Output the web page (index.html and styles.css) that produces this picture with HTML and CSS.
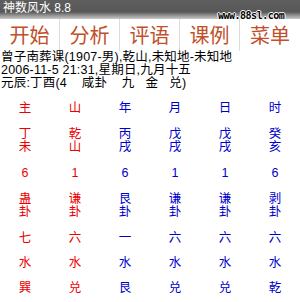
FILE: index.html
```html
<!DOCTYPE html>
<html>
<head>
<meta charset="utf-8">
<link rel="stylesheet" href="styles.css">
</head>
<body>
<div class="titlebar"><span class="title">神数风水 8.8</span></div>
<div class="watermark">www.88sl.com</div>
<div class="menu">
  <div class="btn">开始</div>
  <div class="btn">分析</div>
  <div class="btn">评语</div>
  <div class="btn">课例</div>
  <div class="btn">菜单</div>
</div>
<div class="info">
  <div>曾子南葬课(1907-男),乾山,未知地-未知地</div>
  <div>2006-11-5 21:31,星期日,九月十五</div>
  <div>元辰:丁酉(4&nbsp;&nbsp;&nbsp;&nbsp;咸卦&nbsp;&nbsp;&nbsp;&nbsp;九&nbsp;&nbsp;&nbsp;金&nbsp;&nbsp;&nbsp;兑)</div>
</div>
<div class="grid">
  <div class="row"><div class="cell red"><div>主</div></div><div class="cell red"><div>山</div></div><div class="cell blue"><div>年</div></div><div class="cell blue"><div>月</div></div><div class="cell blue"><div>日</div></div><div class="cell blue"><div>时</div></div></div>
  <div class="row dbl"><div class="cell red"><div>丁</div><div>未</div></div><div class="cell red"><div>乾</div><div>山</div></div><div class="cell blue"><div>丙</div><div>戌</div></div><div class="cell blue"><div>戊</div><div>戌</div></div><div class="cell blue"><div>戊</div><div>戌</div></div><div class="cell blue"><div>癸</div><div>亥</div></div></div>
  <div class="row"><div class="cell red"><div>6</div></div><div class="cell red"><div>1</div></div><div class="cell blue"><div>6</div></div><div class="cell blue"><div>1</div></div><div class="cell blue"><div>1</div></div><div class="cell blue"><div>6</div></div></div>
  <div class="row dbl"><div class="cell red"><div>蛊</div><div>卦</div></div><div class="cell red"><div>谦</div><div>卦</div></div><div class="cell blue"><div>艮</div><div>卦</div></div><div class="cell blue"><div>谦</div><div>卦</div></div><div class="cell blue"><div>谦</div><div>卦</div></div><div class="cell blue"><div>剥</div><div>卦</div></div></div>
  <div class="row"><div class="cell red"><div>七</div></div><div class="cell red"><div>六</div></div><div class="cell blue"><div>一</div></div><div class="cell blue"><div>六</div></div><div class="cell blue"><div>六</div></div><div class="cell blue"><div>六</div></div></div>
  <div class="row"><div class="cell red"><div>水</div></div><div class="cell red"><div>水</div></div><div class="cell blue"><div>水</div></div><div class="cell blue"><div>水</div></div><div class="cell blue"><div>水</div></div><div class="cell blue"><div>水</div></div></div>
  <div class="row"><div class="cell red"><div>巽</div></div><div class="cell red"><div>兑</div></div><div class="cell blue"><div>艮</div></div><div class="cell blue"><div>兑</div></div><div class="cell blue"><div>兑</div></div><div class="cell blue"><div>乾</div></div></div>
</div>
</body>
</html>
```
FILE: styles.css
```css
html, body {
  margin: 0;
  padding: 0;
  background: #ffffff;
  width: 300px;
  height: 302px;
  overflow: hidden;
  font-family: "Liberation Sans", "Noto Sans CJK SC", sans-serif;
}
body { position: relative; }
.titlebar {
  height: 19px;
  background: linear-gradient(#5e5e5e 0px, #585858 12px, #8c8c8c 15px, #c8c8c8 19px);
}
.title {
  display: block;
  color: #ffffff;
  font-size: 12px;
  line-height: 17px;
  padding-left: 3px;
}
.watermark {
  position: absolute;
  left: 218px;
  top: 11px;
  font-family: "DejaVu Sans Mono", monospace;
  font-size: 10px;
  font-weight: bold;
  line-height: 10px;
  color: #000;
  text-shadow: 1px 0 0 #fff, -1px 0 0 #fff, 0 1px 0 #fff, 0 -1px 0 #fff;
  letter-spacing: -0.5px;
}
.menu {
  display: flex;
  height: 32px;
}
.btn {
  flex: 0 0 60px;
  box-sizing: border-box;
  border-right: 1px solid #dcdcdc;
  text-align: center;
  color: #c0502a;
  font-size: 20px;
  line-height: 20px;
  padding-top: 7px;
}
.btn:last-child { border-right: none; }
.info {
  font-size: 12.5px;
  line-height: 13px;
  color: #000;
  padding-left: 1px;
  letter-spacing: 0.2px;
}
.grid {
  padding-top: 6px;
}
.row {
  display: flex;
  padding: 6px 0;
}
.row.dbl {
  padding: 7px 0;
}
.cell {
  flex: 0 0 50px;
  text-align: center;
  font-size: 12.5px;
  line-height: 13px;
}
.red { color: #ee0000; }
.blue { color: #0000cc; }
```
